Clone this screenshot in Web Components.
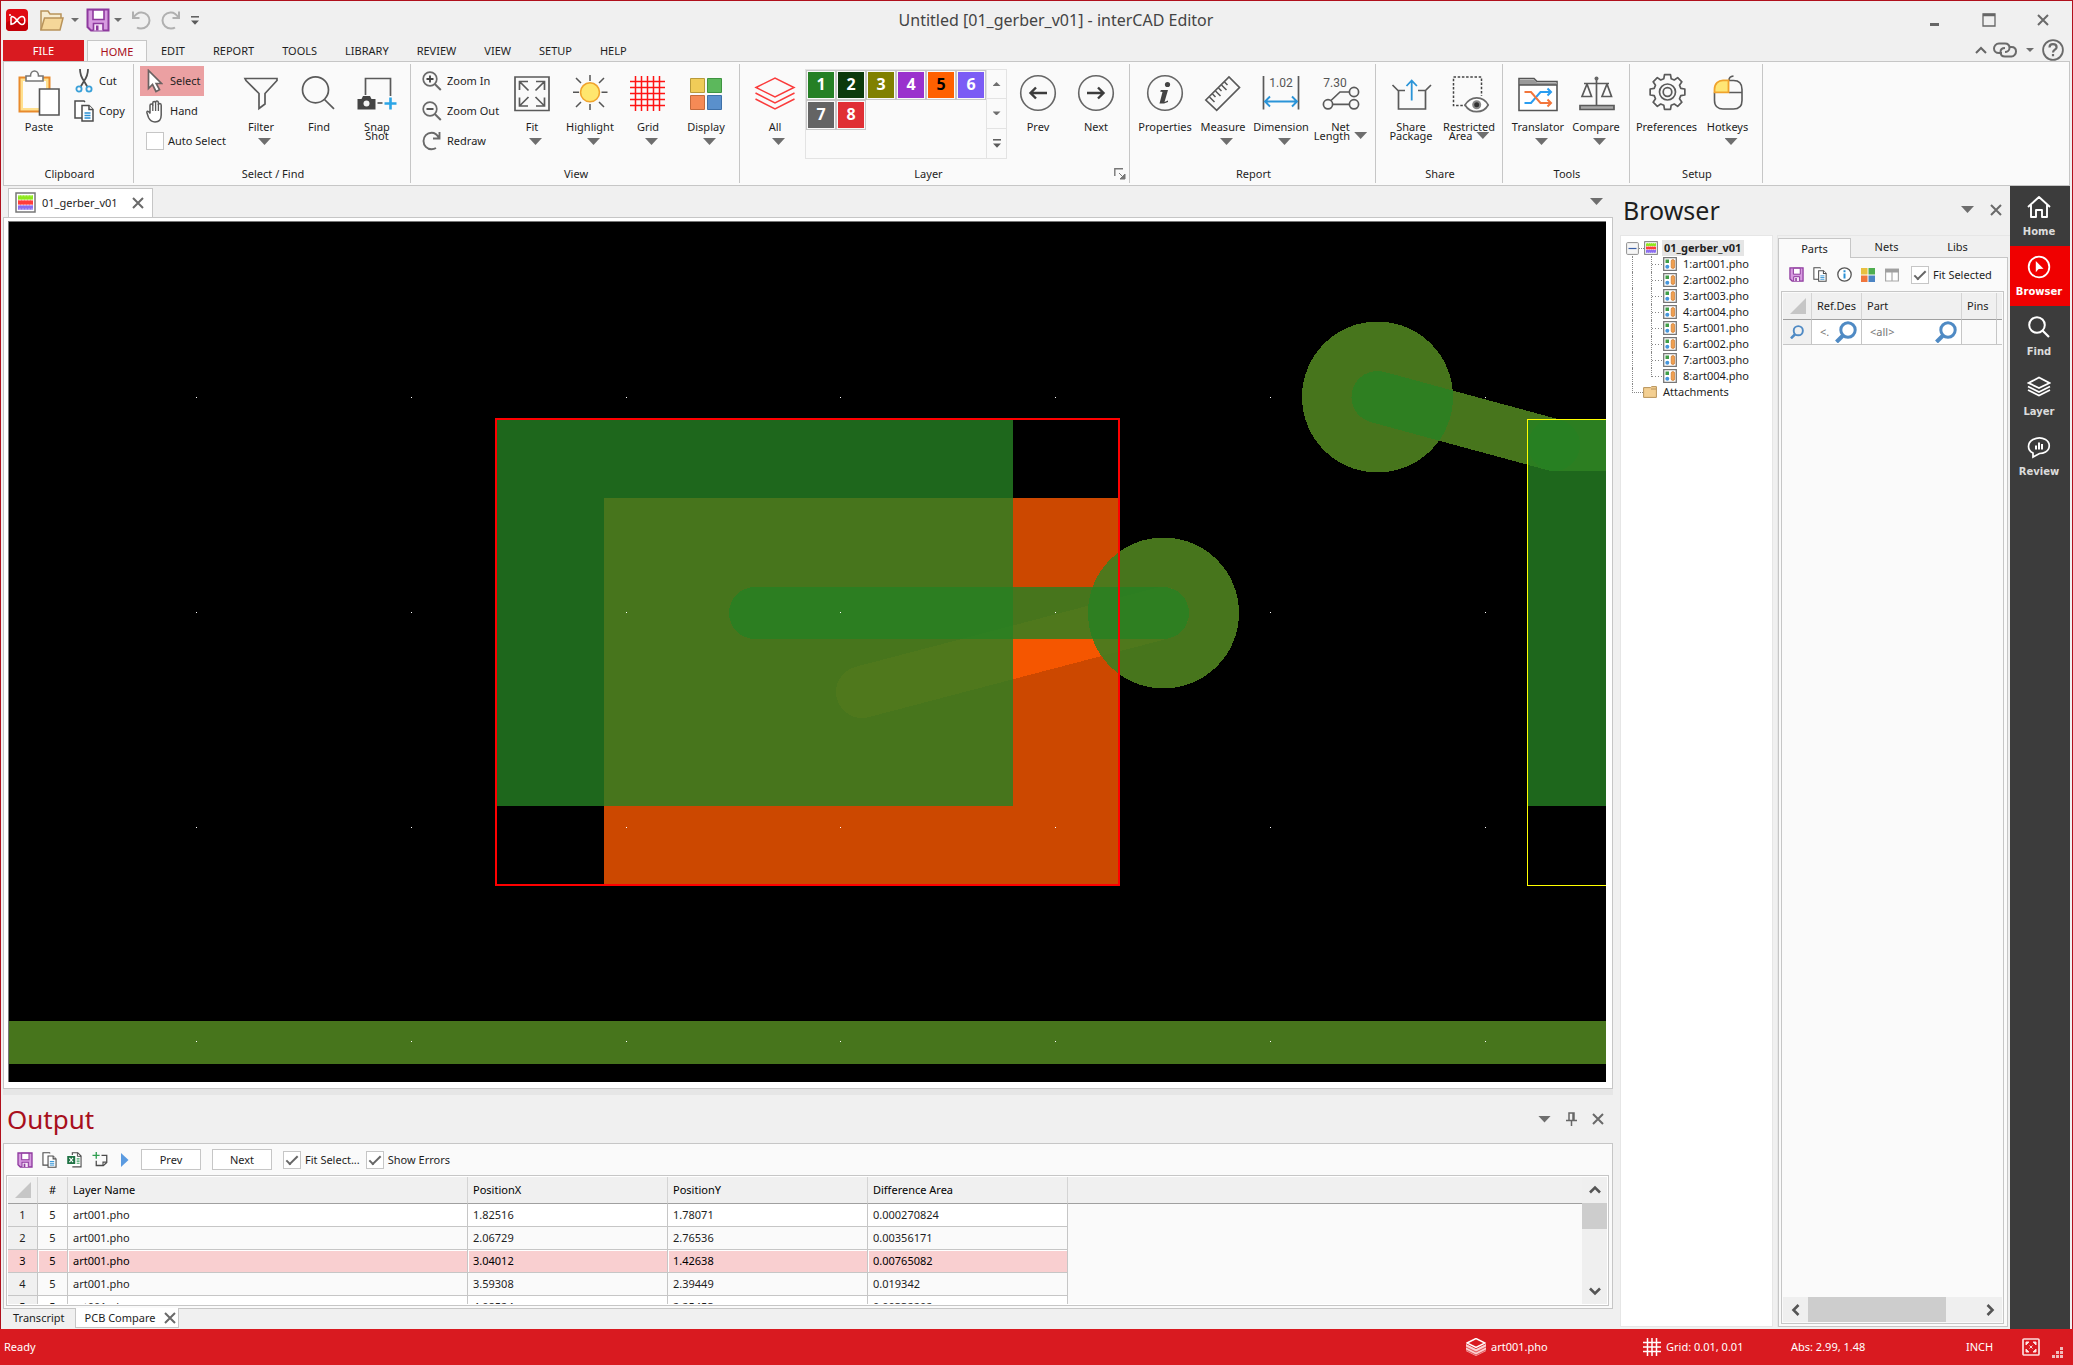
<!DOCTYPE html>
<html lang="en">
<head>
<meta charset="utf-8">
<title>Untitled [01_gerber_v01] - interCAD Editor</title>
<style>
html,body{margin:0;height:100%}
body{font:11px/16px "Noto Sans","Open Sans",sans-serif;color:#1e1e1e;background:#f0f0f0;
--line:#c6c6c6;--bg:#f0f0f0;--panel:#fafafa;--red:#d91a20;--ink:#1e1e1e;--grey:#6e6e6e}
</style>
</head>
<body>
<cad-app></cad-app>
<script>
const BASE = `<style>
*{box-sizing:border-box}
button,input{font:inherit;color:inherit;background:none;border:0;padding:0;margin:0;border-radius:0;outline:0}
a{color:inherit;text-decoration:none}
ul{list-style:none;margin:0;padding:0}
.caret{display:block;width:13px;height:7px;background:#6e6e6e;clip-path:polygon(0 0,100% 0,50% 100%)}
.caret.s{width:8px;height:4px}
</style>`;

function define(name, css, html) {
  customElements.define(name, class extends HTMLElement {
    connectedCallback() {
      if (this.shadowRoot) return;
      const t = document.createElement('template');
      t.innerHTML = BASE + `<style>${css}</style>` + (typeof html === 'function' ? html(this) : html);
      this.attachShadow({ mode: 'open' }).append(t.content.cloneNode(true));
    }
  });
}

function gear(cx, cy, r1, r2, n) {
  const p = [];
  for (let i = 0; i < n; i++) {
    const a = (i / n) * Math.PI * 2 - Math.PI / 2;
    [[-.27, r1], [-.17, r2], [.17, r2], [.27, r1]].forEach(([d, r]) =>
      p.push((cx + Math.cos(a + d) * r).toFixed(2) + ' ' + (cy + Math.sin(a + d) * r).toFixed(2)));
  }
  return 'M' + p.join('L') + 'Z';
}

const S = 'fill="none" stroke="#5a5a5a" stroke-width="1.7"';
const SAVE = '<path d="M1.5 1.5h21v21H5l-3.500-3.500z" fill="#d79be0" stroke="#8e3a9e" stroke-width="2"/><path d="M7 2h11v9.500H7z" fill="#fff" stroke="#8e3a9e" stroke-width="1.600"/><path d="M7.500 22.500V15.500h9.500v7" fill="#f6e6f8" stroke="#8e3a9e" stroke-width="1.600"/><path d="M10 17.500h2.500v5H10z" fill="#8e3a9e"/>';
const STACK = '<rect x="1" y="1" width="19" height="19" fill="#fff" stroke="#777" stroke-width="1.500"/><g stroke-width="4.500" fill="none"><path d="M3 5.500h15" stroke="#8ee81c"/><path d="M3 10.500h15" stroke="#ff3c3c"/><path d="M3 15.500h15" stroke="#8a6cf0"/></g><g stroke="#fff" stroke-width=".8" stroke-dasharray="1 2"><path d="M3.500 3.800h14M4.500 8h14M3.500 13h14M4.500 17h14"/></g>';
const COPY = '<g fill="#fff" stroke="#4c4c4c" stroke-width="1.500"><path d="M9 18H1V1h9l1 1"/><path d="M8 5.500h7l4 4V21H8z"/><path d="M15 5.500v4h4" /></g><path d="M10.500 13h6M10.500 15.500h6M10.500 18h6" stroke="#2a8fd4" stroke-width="1.300"/>';
const ZOOM = '<circle cx="8" cy="8" r="6.800" fill="none" stroke="#6a6a6a" stroke-width="1.700"/><path d="M12.800 13l6 6" stroke="#6a6a6a" stroke-width="2"/>';
const ICONS = {
  logo: ['0 0 22 22', '<rect width="22" height="22" rx="4" fill="#e00a12"/><rect y="12" width="22" height="10" rx="4" fill="#c40008"/><path d="M5 8.500v7M5 15.300c3 0 4-1.300 6-4s3-3.800 5-3.800 2.800 1.500 2.800 4-1 4-2.800 4-3-1.500-5-4.200S8 7.500 5.500 7.500" fill="none" stroke="#fff" stroke-width="1.500" stroke-linecap="round"/><circle cx="4" cy="6" r="1" fill="#fff"/>'],
  open: ['0 0 24 21', '<path d="M1 20V1h7l2 3h11v5" fill="#f7ecd0" stroke="#b8935a" stroke-width="1.500"/><path d="M1 20L4.500 8H23l-3 12z" fill="#f5d799" stroke="#b8935a" stroke-width="1.500"/>'],
  save: ['0 0 24 24', SAVE],
  undo: ['0 0 20 20', '<path d="M2 1.500v6.500h6.500M2.500 7.500C5 3.500 8 2 11 2.500c4.500.500 7.500 4 7.500 8 0 4.500-4 8-8.500 8-1.500 0-3-.300-4-1" fill="none" stroke="#b0b0b0" stroke-width="2"/>'],
  redo: ['0 0 20 20', '<path d="M18 1.500v6.500h-6.500M17.500 7.500C15 3.500 12 2 9 2.500c-4.500.500-7.500 4-7.500 8 0 4.500 4 8 8.500 8 1.500 0 3-.300 4-1" fill="none" stroke="#b0b0b0" stroke-width="2"/>'],
  more: ['0 0 8 9', '<path d="M0 .800h8" stroke="#5a5a5a" stroke-width="1.500"/><path d="M0 4.500h8L4 8.800z" fill="#5a5a5a"/>'],
  min: ['0 0 14 14', '<path d="M2 11.500h9" stroke="#666" stroke-width="3"/>'],
  max: ['0 0 14 14', '<path d="M1 1h12v12H1z" fill="none" stroke="#666" stroke-width="1.300"/><path d="M1 2h12" stroke="#666" stroke-width="2.500"/>'],
  close: ['0 0 12 12', '<path d="M1 1l10 10M11 1L1 11" stroke="#6a6a6a" stroke-width="2"/>'],
  up: ['0 0 12 8', '<path d="M1 7l5-5 5 5" fill="none" stroke="#666" stroke-width="2"/>'],
  link: ['0 0 24 16', '<g fill="none" stroke="#6a6a6a" stroke-width="2"><path d="M9 11H6C3 11 1 9 1 6.500S3 1.500 6 1.500h6c3 0 4.500 2 4.500 4.500S14 10 12 10"/><path d="M16 5h2.500c3 0 4.500 2 4.500 4.500s-2 5-4.500 5H12c-3 0-4.500-2-4.500-4.500S9.500 6 12 6"/></g>'],
  help: ['0 0 22 22', '<circle cx="11" cy="11" r="9.900" fill="none" stroke="#6a6a6a" stroke-width="1.800"/><path d="M7.500 8.500c0-2 1.500-3.300 3.500-3.300s3.600 1.200 3.600 3c0 2.500-3.600 2.500-3.600 5.300M11 15v2.300" fill="none" stroke="#6a6a6a" stroke-width="2.200"/>'],
  paste: ['18 70 42 46', '<path d="M19.500 77.500h30v34h-30z" fill="#ffe08e" stroke="#e88a2c" stroke-width="2"/><path d="M23 81h23v27H23z" fill="#fcfcfc"/><path d="M26 81v-5h4.500c0-3 2-5 4-5s4 2 4 5H43v5z" fill="#fff" stroke="#777" stroke-width="1.600"/><path d="M39.500 89h19.500v26H39.500z" fill="#fff" stroke="#555" stroke-width="1.600"/>'],
  cut: ['0 0 20 24', '<path d="M6 0c0 5 1 8 4 12l3.500 6M14 0c0 5-1 8-4 12l-3.500 6" fill="none" stroke="#505050" stroke-width="1.800"/><g fill="none" stroke="#3aa0d8" stroke-width="1.800"><circle cx="5" cy="20" r="2.600"/><circle cx="15" cy="20" r="2.600"/></g>'],
  copy: ['0 0 20 22', COPY],
  arrow: ['0 0 16 24', '<path d="M1.500 1.500v18l4-4 3.500 7 3.500-1.800-3.300-6.200h5.300z" fill="#fff" stroke="#6a6262" stroke-width="1.700"/>'],
  hand: ['0 0 18 23', '<path d="M4 13.500V5.500c0-2 2.800-2 2.800 0V3c0-2 2.800-2 2.800 0v-.500c0-2 2.800-2 2.800.500v2c0-2 2.800-2 2.800.300V15c0 4-2 7-6.200 7-3.500 0-5-1.500-6.500-4.500L1 13c-.700-2 1.500-3 3 .5z" fill="#fff" stroke="#5a5a5a" stroke-width="1.500"/><path d="M6.800 5v6M9.600 3v8M12.400 4v7" stroke="#5a5a5a" stroke-width="1.300"/>'],
  filter: ['240 70 42 46', `<path d="M245 78.500h32v2l-12 13v10.500l-6 4.500V93.500l-13-13z" ${S}/>`],
  find: ['297 70 42 46', `<circle cx="314.500" cy="89.800" r="13" ${S}/><path d="M323.500 99.500l9.500 9.300" ${S} stroke-width="2"/>`],
  snap: ['356 70 42 46', `<path d="M365.500 95V78.500h25V96" ${S}/><path d="M357.500 99h4l1.500-3h7l1.500 3h4v10.500h-18z" fill="#444"/><circle cx="366.500" cy="103.500" r="3" fill="#f4f4f4"/><path d="M377.500 103h5" stroke="#444" stroke-width="1.500"/><path d="M384.500 103.500h12M390.500 97.500v12" stroke="#2ba5e6" stroke-width="2.600"/>`],
  zin: ['0 0 20 20', ZOOM + '<path d="M4.500 8h7M8 4.500v7" stroke="#444" stroke-width="1.800"/>'],
  zout: ['0 0 20 20', ZOOM + '<path d="M4.500 8h7" stroke="#444" stroke-width="1.800"/>'],
  redraw: ['0 0 20 20', '<path d="M17.500 1v6.500H11M17 7C15 3 12 1.800 9.500 1.800 5 1.800 1.500 5.500 1.500 10s3.500 8.200 8 8.200c1.500 0 3-.300 4.500-1.200" fill="none" stroke="#6a6a6a" stroke-width="1.900"/>'],
  fit: ['511 70 42 46', `<path d="M515 77h34v33.500h-34z" ${S}/><path d="M519.500 90v-8.500h8.500M519.500 81.500l9 9M536 81.500h8.500V90M544.500 81.500l-9 9M519.500 97.500v8.500h8.500M519.500 106l9-9M536 106h8.500v-8.500M544.500 106l-9-9" ${S}/>`],
  sun: ['568 70 42 46', '<circle cx="589" cy="92.300" r="9.500" fill="#ffe66e" stroke="#f0a32c" stroke-width="1.600"/><path d="M589 75v6M589 104v6M572 92.300h6M600.500 92.300h6M575 78l5 5M603 78l-5 5M575 107l5-5M603 107l-5-5" stroke="#555" stroke-width="1.500"/>'],
  grid: ['627 70 42 46', '<path d="M635.500 76v35M641.500 76v35M647.500 76v35M653.500 76v35M659.500 76v35M630 81.500h35M630 87.500h35M630 93.500h35M630 99.500h35M630 105.500h35" stroke="#ff1414" stroke-width="1.500"/>'],
  display: ['686 70 42 46', '<g stroke-width="1"><path d="M691.500 78.500h14v14h-14z" fill="#f0cc58" stroke="#b89a3a"/><path d="M708.500 78.500h14v14h-14z" fill="#5cb85c" stroke="#3e9440"/><path d="M691.500 95.500h14v14h-14z" fill="#f58a56" stroke="#c46a3c"/><path d="M708.500 95.500h14v14h-14z" fill="#5a90cc" stroke="#3e70a8"/></g>'],
  layers: ['754 70 42 46', '<g fill="none" stroke="#fa3c3c" stroke-width="1.500"><path d="M756 87.500l19-9.500 19 9.500-19 9.500zM755.500 93l19.500 10 19.500-10M755.500 99l19.500 10 19.500-10"/></g>'],
  prev: ['1017 70 42 46', '<circle cx="1038" cy="93" r="17.300" fill="none" stroke="#666" stroke-width="1.600"/><path d="M1047 93h-16M1036 87.500l-5.500 5.500 5.500 5.500" fill="none" stroke="#3c3c3c" stroke-width="2.400"/>'],
  next: ['1017 70 42 46', '<circle cx="1038" cy="93" r="17.300" fill="none" stroke="#666" stroke-width="1.600"/><path d="M1029 93h16M1040 87.500l5.500 5.500-5.500 5.500" fill="none" stroke="#3c3c3c" stroke-width="2.400"/>'],
  info: ['1144 70 42 46', '<circle cx="1165" cy="93" r="17.300" fill="none" stroke="#666" stroke-width="1.600"/><circle cx="1167.500" cy="84.500" r="2.600" fill="#444"/><path d="M1161 90h7l-3.500 12 3.500-1.500v1.500l-4 1.500h-4.500l3-11.500-2.500-.500z" fill="#444"/>'],
  ruler: ['1203 70 42 46', `<path d="M1206.800 100l23.200-23 10.500 10.500-22.800 22.800z" ${S}/><path d="M1210.500 97l5 5M1213.500 94l3 3M1216.500 91l5 5M1219.500 88l3 3M1222.500 85l5 5M1225.500 82l3 3" stroke="#555" stroke-width="1.500"/>`],
  dim: ['1260 70 42 46', `<path d="M1263.500 76v33.500M1298.500 76v33.500" ${S}/><text x="1281" y="87" text-anchor="middle" font-family="Roboto" font-size="12" fill="#555">1.02</text><path d="M1265 101.500h32M1270 96.500l-5 5 5 5M1292 96.500l5 5-5 5" fill="none" stroke="#2a94d8" stroke-width="1.900"/>`],
  net: ['1320 70 42 46', `<text x="1335" y="87" text-anchor="middle" font-family="Roboto" font-size="12" fill="#555">7.30</text><g ${S}><circle cx="1354" cy="92" r="4.600"/><circle cx="1354" cy="104.300" r="4.600"/><circle cx="1328" cy="104.300" r="4.600"/><path d="M1333 104.300h16M1331 100.500l9-8.500h9"/></g>`],
  share: ['1391 70 42 46', `<path d="M1406 90.500h-7l-5.500-5.500M1399.500 90.500V109h27V90.500M1419 90.500h7.500l5.500-5.500" ${S}/><path d="M1412.700 100.500V80.500M1407.500 86l5.200-5.500 5.200 5.500" fill="none" stroke="#2a94d8" stroke-width="1.800"/>`],
  area: ['1449 70 42 46', `<path d="M1468 105.500h-13.500V77h28v19" fill="none" stroke="#444" stroke-width="1.500" stroke-dasharray="2.500 1.700"/><path d="M1466 105c3-5 7-7.200 11.700-7.200s9 2.200 11.500 7.200c-2.500 4.500-6.500 6.700-11.500 6.700s-9-2.200-11.700-6.700z" fill="#fff" stroke="#6a6a6a" stroke-width="1.700"/><circle cx="1477.700" cy="104.700" r="4.500" fill="#888"/><circle cx="1477.700" cy="104.700" r="2.500" fill="#333"/>`],
  trans: ['1518 70 42 46', '<path d="M1520 110.500V78.500h15l3 3h20v29z" fill="#fff" stroke="#555" stroke-width="1.600"/><path d="M1521 79.500h14l3 3h20v2.500h-37z" fill="#999"/><path d="M1520 85h38" stroke="#555" stroke-width="1.400"/><g fill="none" stroke-width="2"><path d="M1525.500 103h6.500l9.500-11h10M1548.500 88.500l3.500 3.500-3.500 3.500" stroke="#2b9df0"/><path d="M1525.500 92h6.500l9.500 11h10M1548.500 99.500l3.500 3.500-3.500 3.500" stroke="#f2763c"/></g>'],
  scale: ['1576 70 42 46', `<g ${S}><path d="M1581 105.500h34v4h-34z" fill="#a8a8a8"/><path d="M1597.500 79v26M1585 83.500h25M1588 84l-5 12.500h9.500L1588 84M1608 84l-5 12.500h9.500L1608 84"/></g><circle cx="1597.500" cy="78.500" r="2" fill="#666"/>`],
  gear: ['1647 70 42 46', `<path d="${gear(1668.5, 92, 13.8, 17.6, 8)}" ${S} stroke-linejoin="round"/><circle cx="1668.500" cy="92" r="8" ${S}/><circle cx="1668.500" cy="92" r="4.300" ${S} stroke="#888"/>`],
  mouse: ['1707 70 42 46', '<path d="M1714.500 92.500v8c0 6 4 8.500 8.500 8.500h10.500c5 0 8.500-2.500 8.500-8.500v-11c0-6-3.500-9-8.500-9H1729" fill="none" stroke="#5a5a5a" stroke-width="1.600"/><path d="M1729 92.500h13M1729 80c0-2 1-3.500 4.500-4" fill="none" stroke="#5a5a5a" stroke-width="1.600"/><path d="M1714.500 92.300v-3c0-6 4-9 8.500-9h5.500v12z" fill="#ffe675" stroke="#f0a32c" stroke-width="1.800"/>'],
  launch: ['0 0 12 12', '<path d="M.800 8V.800H9" fill="none" stroke="#777" stroke-width="1.400"/><path d="M5 5l5 5M11 6v5H6z" stroke="#777" fill="#777"/>'],
  stack: ['0 0 21 21', STACK],
  excel: ['0 0 20 22', '<path d="M7 20.500h12v-15L14.500 1H7v3" fill="#fff" stroke="#4c4c4c" stroke-width="1.500"/><path d="M14 1v5h5" fill="none" stroke="#4c4c4c" stroke-width="1.300"/><path d="M13 9.500h4M13 12.500h4M13 15.500h4" stroke="#38a060" stroke-width="1.500"/><path d="M0 5.500h11v11H0z" fill="#1f7244"/><path d="M3 8l5 6M8 8l-5 6" stroke="#fff" stroke-width="1.600"/>'],
  newdoc: ['0 0 20 20', '<path d="M5 0v9M0 4.500h9.500" stroke="#2f9e50" stroke-width="1.800"/><path d="M5 11.500V18h9.500l4.500-4V4.500h-7" fill="none" stroke="#4c4c4c" stroke-width="1.700"/><path d="M14 18v-4.500h4.500" fill="none" stroke="#4c4c4c" stroke-width="1.500"/>'],
  play: ['0 0 8 14', '<path d="M0 0l7.500 7L0 14z" fill="#5a9ae0"/>'],
  pin: ['0 0 11 14', '<path d="M3 8V1h5v7M0 8.500h11M5.500 9v5M7 1v7" fill="none" stroke="#666" stroke-width="1.500"/>'],
  infoS: ['0 0 15 15', '<circle cx="7.500" cy="7.500" r="6.700" fill="#fff" stroke="#555" stroke-width="1.300"/><path d="M7.500 6.500v5M7.500 3.300v1.900" stroke="#2a8fd4" stroke-width="2"/>'],
  tiles: ['0 0 14 14', '<path d="M0 0h6.500v6.500H0z" fill="#e8c040"/><path d="M7.500 0H14v6.500H7.500z" fill="#4fae4f"/><path d="M0 7.500h6.500V14H0z" fill="#f0763c"/><path d="M7.500 7.500H14V14H7.500z" fill="#4c84c4"/>'],
  table: ['0 0 14 14', '<path d="M.600 1h12.800v12H.600z" fill="#fff" stroke="#a8a8a8" stroke-width="1.200"/><path d="M0 1h14v3.500H0z" fill="#a0a0a0"/><path d="M7 4v9" stroke="#a8a8a8" stroke-width="1.200"/>'],
  mag: ['0 0 22 22', '<circle cx="13" cy="9" r="7.200" fill="none" stroke="#4f8ac4" stroke-width="3"/><path d="M8 14.500L1.500 21" stroke="#4f8ac4" stroke-width="4"/>'],
  corner: ['0 0 16 16', '<path d="M16 0v16H0z" fill="#c6c6c6"/>'],
  file: ['0 0 14 14', '<path d="M.700.700h12.600v12.600H.700z" fill="#fff" stroke="#777" stroke-width="1.300"/><path d="M2.500 2.500h3.500v3.500H2.500z" fill="#3f9e46"/><circle cx="4.300" cy="9.800" r="2" fill="#4596dc"/><rect x="8.200" y="2.600" width="3.400" height="8.800" rx="1.500" fill="#f0a050" stroke="#c87830" stroke-width=".7"/>'],
  folder: ['0 0 14 12', '<path d="M.600 11.400V1.600h7l1-1h4.800v10.800z" fill="#f3cf92" stroke="#b8935a"/><path d="M8 3h5" stroke="#b8935a"/>'],
  minus: ['0 0 13 13', '<rect x=".6" y=".6" width="11.800" height="11.800" rx="1" fill="#f6f6f6" stroke="#909090"/><path d="M2.500 6.500h8" stroke="#3a5fa8" stroke-width="1.200"/>'],
  home: ['0 0 24 24', '<path d="M1 12L12 2l11 10M4 10v12h5v-7h6v7h5V10" fill="none" stroke="#fff" stroke-width="1.900" stroke-linejoin="round"/>'],
  compass: ['0 0 24 24', '<circle cx="12" cy="12" r="10.300" fill="none" stroke="#fff" stroke-width="1.800"/><path d="M8.800 6v11.200l2.900-3.200 4.800-.3z" fill="#fff"/>'],
  findN: ['0 0 24 24', '<circle cx="10" cy="10" r="7.800" fill="none" stroke="#fff" stroke-width="2"/><path d="M15.500 15.500L22 22" stroke="#fff" stroke-width="2.200"/>'],
  layerN: ['0 0 24 24', '<g fill="none" stroke="#fff" stroke-width="1.800"><path d="M1.500 8L12 2.500 22.500 8 12 13zM1 11.500l11 5.500 11-5.500M1 15l11 5.500L23 15"/></g>'],
  review: ['0 0 24 24', '<path d="M6 18c-6-3-6-10 0-13.500 4-2 9-2 12.500 0 5 3 5 9.500 0 12.500-2 1.200-4 1.500-6 1.500L6 22z" fill="none" stroke="#fff" stroke-width="1.700"/><path d="M9 10.500V14.500M12 7.500v7M15 9v5.500" stroke="#fff" stroke-width="2"/>'],
  layerS: ['0 0 20 18', '<path d="M1 5l9-4.500L19 5l-9 4.500z" fill="none" stroke="#fff" stroke-width="1.500"/><path d="M0 6l10 5 10-5v7l-10 5-10-5z" fill="#fbd0d0"/><path d="M0 9l10 5 10-5M0 12l10 5 10-5" fill="none" stroke="#d91a20" stroke-width=".7"/>'],
  gridS: ['0 0 18 18', '<path d="M4.500 0v18M9 0v18M13.500 0v18M0 4.500h18M0 9h18M0 13.500h18" stroke="#fff" stroke-width="1.500"/>'],
  fitS: ['0 0 18 18', '<rect x="1" y="1" width="16" height="16" rx="1" fill="none" stroke="#fbdcdc" stroke-width="1.700"/><path d="M4 4h3L4 7zM14 4h-3l3 3zM4 14h3l-3-3zM14 14h-3l3-3zM7.500 7.500l3 3M10.500 7.500l-3 3" fill="#fff" stroke="#fbdcdc"/>'],
  grip: ['0 0 12 12', '<g fill="#f0bcbc"><path d="M8 0h3v3H8zM4 4h3v3H4zM8 4h3v3H8zM0 8h3v3H0zM4 8h3v3H4zM8 8h3v3H8z"/></g>'],
};

define('ui-icon', `:host{display:block;flex:none}svg{display:block;width:100%;height:100%}`, el => {
  const [vb, body] = ICONS[el.getAttribute('name')];
  const [, , w, h] = vb.split(' ');
  el.style.width = (el.getAttribute('w') || w) + 'px';
  el.style.height = (el.getAttribute('h') || h) + 'px';
  return `<svg viewBox="${vb}" aria-hidden="true">${body}</svg>`;
});

define('tool-check', `:host{display:block}
label{display:flex;align-items:center;gap:4px;white-space:nowrap}
input{appearance:none;width:18px;height:18px;border:1px solid var(--line);background:#fff;display:flex;align-items:center;justify-content:center}
input:checked::after{content:"";width:10px;height:4px;border:solid #666;border-width:0 0 2px 2px;transform:translateY(-1px) rotate(-45deg)}`,
  el => `<label><input type="checkbox" ${el.hasAttribute('checked') ? 'checked' : ''}><span><slot></slot></span></label>`);

define('title-bar', `:host{display:flex;height:38px;align-items:stretch}
button{display:flex;align-items:center;justify-content:center}
.qa{display:flex;align-items:center;padding-left:3px}
.d{width:22px}.u{width:30px}.m{width:18px}.n{width:16px}.l{margin-right:12px}
h1{flex:1;margin:0;font-size:16px;line-height:38px;font-weight:400;text-align:center;color:#444}
.w button{width:54px;height:100%}.w{display:flex}`,
  `<div class="qa"><button class="l" aria-label="Application menu"><ui-icon name="logo"></ui-icon></button>
<button aria-label="Open"><ui-icon name="open"></ui-icon></button><button class="d" aria-label="Open options"><i class="caret s"></i></button>
<button aria-label="Save"><ui-icon name="save"></ui-icon></button><button class="n" aria-label="Save options"><i class="caret s"></i></button>
<button class="u" aria-label="Undo"><ui-icon name="undo"></ui-icon></button><button class="u" aria-label="Redo"><ui-icon name="redo"></ui-icon></button>
<button class="m" aria-label="Customize"><ui-icon name="more"></ui-icon></button></div>
<h1>Untitled [01_gerber_v01] - interCAD Editor</h1>
<div class="w"><button aria-label="Minimize"><ui-icon name="min"></ui-icon></button><button aria-label="Maximize"><ui-icon name="max"></ui-icon></button><button aria-label="Close"><ui-icon name="close"></ui-icon></button></div>`);

define('menu-tabs', `:host{display:flex;height:22px;justify-content:space-between}
nav{display:flex;align-items:flex-end}
nav button{height:21px;padding:0 14px}
nav .file{background:var(--red);color:#fff;width:81px;margin-right:3px}
nav .on{width:60px;padding:0;background:var(--panel);border:1px solid var(--line);border-bottom:0;color:#a80f1c;height:22px;margin-bottom:-1px}
.r{display:flex;align-items:center;padding-right:6px}
.r button{display:flex}
.k{margin:0 9px 0 6px}.o{margin-right:8px}`,
  `<nav><button class="file">FILE</button><button class="on">HOME</button>${['EDIT', 'REPORT', 'TOOLS', 'LIBRARY', 'REVIEW', 'VIEW', 'SETUP', 'HELP'].map(t => `<button>${t}</button>`).join('')}</nav>
<div class="r"><button aria-label="Collapse ribbon"><ui-icon name="up"></ui-icon></button><button class="k" aria-label="Share link"><ui-icon name="link"></ui-icon></button><button class="o" aria-label="Link options"><i class="caret s"></i></button><button aria-label="Help"><ui-icon name="help"></ui-icon></button></div>`);

define('ribbon-group', `:host{display:flex;flex-direction:column;position:relative;margin:2px 0;padding:0 4px 0 6px;border-right:1px solid var(--line)}
.b{display:flex;flex:1}
.l{height:17px;line-height:16px;text-align:center}
:host([launcher]) .l{padding-right:14px}
button{position:absolute;right:3px;bottom:3px}`,
  el => `<div class="b"><slot></slot></div><div class="l">${el.getAttribute('label')}</div>${el.hasAttribute('launcher') ? '<button aria-label="Layer options"><ui-icon name="launch"></ui-icon></button>' : ''}`);

define('ribbon-button', `:host{display:block;width:58px}:host([wide]){width:61px}
button{display:flex;flex-direction:column;align-items:center;width:100%;height:96px;padding-top:6px;line-height:9px}
.t{margin-top:6px;white-space:nowrap}
.r{display:flex;align-items:center;gap:4px;white-space:nowrap}
.c{margin:7px 0 0 7px}`,
  el => {
    const c = el.hasAttribute('caret'), s = el.getAttribute('second');
    return `<button><ui-icon name="${el.getAttribute('icon')}"></ui-icon><span class="t"><slot></slot></span>${s ? `<span class="${c ? 'r' : ''}">${s}${c ? '<i class="caret"></i>' : ''}</span>` : c ? '<i class="caret c"></i>' : ''}</button>`;
  });

define('ribbon-item', `:host{display:block;height:30px}
button{display:flex;align-items:center;height:30px;white-space:nowrap}
.i{width:30px;display:flex;justify-content:center}
:host([on]) button{background:#eba0a2;width:64px}`,
  el => `<button><span class="i"><ui-icon name="${el.getAttribute('icon')}"></ui-icon></span><slot></slot></button>`);

define('layer-gallery', `:host{display:grid;grid-template-columns:180px 20px;margin:5px 2px 0 1px;height:90px;border:1px solid #e3e3e3}
.s{display:flex;flex-wrap:wrap;align-content:flex-start}
.s button{width:30px;height:30px;border:1px solid #c8c8c8;padding:1px}
.s span{display:block;height:26px;line-height:25px;font-weight:700;font-size:16px;color:#fff;text-align:center}
.a{display:grid;grid-template-rows:1fr 1fr 1fr;border-left:1px solid #e3e3e3}
.a button{display:flex;align-items:center;justify-content:center;border-bottom:1px solid #e3e3e3}
.a button:last-child{border:0}.up{transform:scaleY(-1)}`,
  () => `<div class="s">${['#258025', '#0c3a0c', '#808000', '#9a32cd', '#ff6000', '#7b5cf5', '#646464', '#e03035'].map((c, i) => `<button aria-label="Layer ${i + 1}"><span style="background:${c}${i === 4 ? ';color:#000' : ''}">${i + 1}</span></button>`).join('')}</div>
<div class="a"><button aria-label="Scroll up"><i class="caret s up"></i></button><button aria-label="Scroll down"><i class="caret s"></i></button><button aria-label="More"><ui-icon name="more"></ui-icon></button></div>`);

define('app-ribbon', `:host{display:flex;border:1px solid var(--line);background:var(--panel);height:125px}
.c{display:flex;flex-direction:column;padding-top:2px}
.k{width:61px;padding-left:1px}.q{width:92px}.v{width:86px}
tool-check{padding:6px 0 0 6px}`,
  `<ribbon-group label="Clipboard"><ribbon-button icon="paste">Paste</ribbon-button><div class="c k"><ribbon-item icon="cut">Cut</ribbon-item><ribbon-item icon="copy">Copy</ribbon-item></div></ribbon-group>
<ribbon-group label="Select / Find"><div class="c q"><ribbon-item icon="arrow" on>Select</ribbon-item><ribbon-item icon="hand">Hand</ribbon-item><tool-check>Auto Select</tool-check></div>
<ribbon-button icon="filter" caret>Filter</ribbon-button><ribbon-button icon="find">Find</ribbon-button><ribbon-button icon="snap" second="Shot">Snap</ribbon-button></ribbon-group>
<ribbon-group label="View"><div class="c v"><ribbon-item icon="zin">Zoom In</ribbon-item><ribbon-item icon="zout">Zoom Out</ribbon-item><ribbon-item icon="redraw">Redraw</ribbon-item></div>
<ribbon-button icon="fit" caret>Fit</ribbon-button><ribbon-button icon="sun" caret>Highlight</ribbon-button><ribbon-button icon="grid" caret>Grid</ribbon-button><ribbon-button icon="display" caret>Display</ribbon-button></ribbon-group>
<ribbon-group label="Layer" launcher><ribbon-button icon="layers" caret>All</ribbon-button><layer-gallery></layer-gallery><ribbon-button icon="prev">Prev</ribbon-button><ribbon-button icon="next">Next</ribbon-button></ribbon-group>
<ribbon-group label="Report"><ribbon-button icon="info">Properties</ribbon-button><ribbon-button icon="ruler" caret>Measure</ribbon-button><ribbon-button icon="dim" caret>Dimension</ribbon-button><ribbon-button wide icon="net" caret second="Length">Net</ribbon-button></ribbon-group>
<ribbon-group label="Share"><ribbon-button icon="share" second="Package">Share</ribbon-button><ribbon-button icon="area" caret second="Area">Restricted</ribbon-button></ribbon-group>
<ribbon-group label="Tools"><ribbon-button icon="trans" caret>Translator</ribbon-button><ribbon-button icon="scale" caret>Compare</ribbon-button></ribbon-group>
<ribbon-group label="Setup"><ribbon-button wide icon="gear">Preferences</ribbon-button><ribbon-button wide icon="mouse" caret>Hotkeys</ribbon-button></ribbon-group>`);

/* Board view: the orange layer is painted first, the green layer over it, both at 80 %. */
define('pcb-canvas', `:host{display:block;flex:1;min-height:0;background:#000;border:solid #777;border-width:1px 0 0 1px;overflow:hidden}
svg{display:block;width:100%;height:100%}`, () => {
  const shared = '<circle cx="1154.500" cy="391" r="75.500"/><circle cx="1368.500" cy="175" r="75.500"/><rect x="0" y="799" width="6000" height="43"/><path d="M1368.500 175L1545 223" class="t"/><path d="M1545 223H4000" class="t"/>';
  let dots = '';
  for (let y = 0; y < 4; y++) for (let x = 0; x < 7; x++)
    dots += `<rect x="${Math.round(187 + x * 214.8)}" y="${Math.round(175 + y * 214.8)}" width="1" height="1"/>`;
  return `<svg role="img" aria-label="Board layers" shape-rendering="crispEdges"><style>.o *{fill:#ff5a00;opacity:.8}.g *{fill:#268123;opacity:.8}.t{fill:none!important;stroke-width:52;stroke-linecap:round}.o .t{stroke:#ff5a00}.g .t{stroke:#268123}</style>
<g class="o"><rect x="595" y="276" width="515" height="386"/><path d="M1154 391L853 470" class="t"/>${shared}</g>
<g class="g"><rect x="487" y="197" width="517" height="387"/><rect x="1519" y="197" width="2000" height="387"/><path d="M746 391H1154" class="t"/>${shared}</g>
<g fill="#fff">${dots}</g>
<rect x="487" y="197" width="623" height="466" fill="none" stroke="#f00" stroke-width="2"/>
<rect x="1518.500" y="197.500" width="2000" height="466" fill="none" stroke="#ff0"/></svg>`;
});

define('doc-view', `:host{display:flex;flex-direction:column;flex:1;min-height:0}
.tabs{height:31px;display:flex;align-items:flex-end;justify-content:space-between;padding:0 10px 0 5px}
.tab{height:30px;margin-bottom:-1px;width:145px;display:flex;align-items:center;gap:6px;padding:0 7px 2px 6px;background:#fff;border:1px solid var(--line);border-bottom:0}
.tab button{margin-left:auto;padding-right:1px}
.m{align-self:center}
.f{flex:1;min-height:0;display:flex;border:1px solid var(--line);background:#fff;padding:3px 6px 6px 4px}`,
  `<div class="tabs"><div class="tab"><ui-icon name="stack"></ui-icon><span>01_gerber_v01</span><button aria-label="Close tab"><ui-icon name="close"></ui-icon></button></div><button class="m" aria-label="Documents"><i class="caret"></i></button></div>
<div class="f"><pcb-canvas></pcb-canvas></div>`);

define('scroll-bar', `:host{display:flex;background:#efefef;align-items:stretch}
:host([dir=v]){flex-direction:column;width:25px}:host([dir=h]){height:25px}
button{width:26px;height:26px;flex:none;display:flex;align-items:center;justify-content:center}
:host([dir=h]) button{height:25px;width:25px}
svg{width:14px;height:14px}.track{flex:1;min-height:0;display:flex;flex-direction:inherit}.thumb{background:#cdcdcd}
:host([dir=v]) .thumb{height:26px}:host([dir=h]) .thumb{width:138px}`,
  el => {
    const v = el.getAttribute('dir') === 'v';
    const a = d => `<svg viewBox="0 0 14 14"><path d="${d}" fill="none" stroke="#555" stroke-width="2.600"/></svg>`;
    return `<button aria-label="Back">${a(v ? 'M2 9.500l5-5 5 5' : 'M9.500 2l-5 5 5 5')}</button><div class="track"><div class="thumb"></div></div><button aria-label="Forward">${a(v ? 'M2 4.500l5 5 5-5' : 'M4.500 2l5 5-5 5')}</button>`;
  });

define('output-panel', `:host{display:flex;flex-direction:column;flex:none;border-top:6px solid #e6e6e6}
header{height:48px;display:flex;align-items:center;justify-content:space-between;padding:0 9px 0 4px}
h2{margin:0;font-size:26px;line-height:34px;font-weight:400;color:#a80f1c}
header div{display:flex;gap:15px;align-items:center}header button{display:flex}
.f{border:1px solid var(--line);background:var(--panel);height:166px;padding:0 3px 2px 2px;display:flex;flex-direction:column}
.bar{height:31px;flex:none;display:flex;align-items:center;padding-left:11px}
.bar .i{display:flex;width:25px}
.bar .run{display:flex;width:24px;padding-left:4px}
.bar .b{width:60px;height:21px;border:1px solid var(--line);background:#fff;margin-right:11px}
tool-check{margin-right:6px}
.g{flex:1;min-height:0;border:1px solid var(--line);padding:1px;display:flex;background:#fff}
.v{flex:1;overflow:hidden;background:var(--panel)}
table{border-collapse:separate;border-spacing:0;table-layout:fixed;width:100%}
th,td{font-weight:400;text-align:left;padding:0 5px;border-right:1px solid var(--line);border-bottom:1px solid var(--line);height:23px;line-height:16px;background:#fff}
thead th{height:27px;background:var(--bg);border-color:#a0a0a0;border-right-color:#d4d4d4;color:#000}
th:first-child,td:nth-child(2),thead th:nth-child(2){text-align:center}
tbody th{background:var(--bg)}
tr:nth-child(even) td{background:var(--panel)}
tr.on td,tr.on th{background:#f9cfd0;color:#000}tr.on td{box-shadow:inset 1px 1px #fff}
td:last-child{background:none!important;border:0;box-shadow:none!important}thead th:last-child{border-right:0}
.tabs{display:flex;height:21px;margin-top:-1px;padding-bottom:1px}
.tabs button{padding:0 10px;display:flex;align-items:center}
.tabs .on{background:#fff;border:1px solid var(--line);border-top:0;width:104px;padding:0 2px 0 9px;justify-content:space-between;white-space:nowrap}
thead ui-icon{margin-left:2px}`,
  () => {
    const rows = [['1.82516', '1.78071', '0.000270824'], ['2.06729', '2.76536', '0.00356171'], ['3.04012', '1.42638', '0.00765082'], ['3.59308', '2.39449', '0.019342'], ['4.08524', '2.25453', '0.00332202']];
    return `<header><h2>Output</h2><div><button aria-label="Panel menu"><i class="caret"></i></button><button aria-label="Pin panel"><ui-icon name="pin"></ui-icon></button><button aria-label="Close panel"><ui-icon name="close"></ui-icon></button></div></header>
<div class="f"><div class="bar"><button class="i" aria-label="Save"><ui-icon name="save" w="16" h="16"></ui-icon></button><button class="i" aria-label="Copy"><ui-icon name="copy" w="15" h="16"></ui-icon></button><button class="i" aria-label="Export to Excel"><ui-icon name="excel" w="15" h="16"></ui-icon></button><button class="i" aria-label="New"><ui-icon name="newdoc" w="16" h="15"></ui-icon></button><button class="run" aria-label="Run"><ui-icon name="play"></ui-icon></button>
<button class="b">Prev</button><button class="b">Next</button><tool-check checked>Fit Select...</tool-check><tool-check checked>Show Errors</tool-check></div>
<div class="g"><div class="v"><table><colgroup><col style="width:30px"><col style="width:30px"><col style="width:400px"><col style="width:200px"><col style="width:200px"><col style="width:200px"><col></colgroup>
<thead><tr><th aria-label="Row"><ui-icon name="corner"></ui-icon></th><th>#</th><th>Layer Name</th><th>PositionX</th><th>PositionY</th><th>Difference Area</th><th></th></tr></thead>
<tbody>${rows.map((r, i) => `<tr class="${i === 2 ? 'on' : ''}"><th>${i + 1}</th><td>5</td><td>art001.pho</td>${r.map(c => `<td>${c}</td>`).join('')}<td></td></tr>`).join('')}</tbody></table></div><scroll-bar dir="v"></scroll-bar></div></div>
<div class="tabs"><button>Transcript</button><button class="on">PCB Compare<ui-icon name="close"></ui-icon></button></div>`;
  });

define('object-tree', `:host{display:block;background:#fff;border:1px solid #e6e6e6;width:153px;padding:4px 0 0 5px}
li{height:16px;display:flex;align-items:center;white-space:nowrap}
.dots{width:5px;height:1px;border-top:1px dotted #888}
b{background:#e5e5e5;padding:0 3px 0 2px;margin-left:4px}
.v{margin-left:6px;width:19px;height:16px;border-left:1px dotted #888}
.e{width:12px;height:16px;border-left:1px dotted #888;background:repeating-linear-gradient(90deg,#888 0 1px,transparent 1px 3px) 0 8px/100% 1px no-repeat}
.e.z{height:9px;align-self:flex-start}
.x{margin-left:6px;width:11px;height:9px;align-self:flex-start;border-left:1px dotted #888;border-bottom:1px dotted #888}
li span{margin-left:6px}`,
  () => `<ul><li><ui-icon name="minus"></ui-icon><i class="dots"></i><ui-icon name="stack" w="14" h="14"></ui-icon><b>01_gerber_v01</b></li>
${[1, 2, 3, 4, 1, 2, 3, 4].map((n, i) => `<li><i class="v"></i><i class="e ${i === 7 ? 'z' : ''}"></i><ui-icon name="file"></ui-icon><span>${i + 1}:art00${n}.pho</span></li>`).join('')}
<li><i class="x"></i><ui-icon name="folder"></ui-icon><span>Attachments</span></li></ul>`);

define('parts-view', `:host{display:flex;flex-direction:column;flex:1;min-width:0;border:solid #e6e6e6;border-width:1px 0 0 1px;padding:2px 1px 0 0}
.tabs{display:flex;height:19px}
.tabs button{width:71px;height:18px}
.tabs .on{width:73px;height:20px;background:var(--panel);border:1px solid var(--line);border-bottom:0;position:relative}
.f{flex:1;min-height:0;border:1px solid var(--line);background:var(--panel);padding:0 3px 2px 2px;display:flex;flex-direction:column;margin-right:1px}
.bar{height:33px;flex:none;display:flex;align-items:center;padding-left:8px}
.bar button{width:24px;display:flex}
tool-check{margin-left:2px}
.g{flex:1;min-height:0;border:1px solid var(--line);padding:1px;display:flex;flex-direction:column}
.v{flex:1;min-height:0;overflow:hidden}
table{border-collapse:separate;border-spacing:0;table-layout:fixed;width:260px}
th,td{font-weight:400;text-align:left;padding:0 5px;height:27px;background:var(--bg);border-right:1px solid #d4d4d4;border-bottom:1px solid #a0a0a0;white-space:nowrap}
td{height:25px;border-color:var(--line);background:#fff}td:first-child,td:nth-last-child(-n+2){background:var(--bg)}td:nth-last-child(-n+2){background:var(--panel)}
th:first-child,td:first-child{padding:0 5px 0 7px}
.q{display:flex;align-items:center;margin-right:-1px;padding-left:3px}
input{flex:1;min-width:0;width:0;color:#777}`,
  `<div class="tabs"><button class="on">Parts</button><button>Nets</button><button>Libs</button></div>
<div class="f"><div class="bar"><button aria-label="Save"><ui-icon name="save" w="15" h="15"></ui-icon></button><button aria-label="Copy"><ui-icon name="copy" w="14" h="15"></ui-icon></button><button aria-label="Info"><ui-icon name="infoS"></ui-icon></button><button aria-label="Colors"><ui-icon name="tiles"></ui-icon></button><button aria-label="Columns"><ui-icon name="table"></ui-icon></button><tool-check checked>Fit Selected</tool-check></div>
<div class="g"><div class="v"><table><colgroup><col style="width:29px"><col style="width:50px"><col style="width:100px"><col style="width:35px"><col></colgroup>
<tr><th aria-label="Row"><ui-icon name="corner"></ui-icon></th><th>Ref.Des</th><th>Part</th><th>Pins</th><th></th></tr>
<tr><td aria-label="Filter"><ui-icon name="mag" w="14" h="14"></ui-icon></td><td><div class="q"><input aria-label="Filter by reference" value="&lt;."><ui-icon name="mag"></ui-icon></div></td><td><div class="q"><input aria-label="Filter by part" value="&lt;all&gt;"><ui-icon name="mag"></ui-icon></div></td><td></td><td></td></tr></table></div>
<scroll-bar dir="h"></scroll-bar></div></div>`);

define('browser-panel', `:host{display:flex;flex-direction:column;width:390px;flex:none;margin-left:7px}
header{height:49px;display:flex;align-items:center;justify-content:space-between;padding:0 8px 2px 3px}
h2{margin:0;font-size:25px;line-height:34px;font-weight:400}
header div{display:flex;gap:16px;align-items:center}header button{display:flex}
.b{flex:1;min-height:0;display:flex;gap:4px;padding-bottom:2px}`,
  `<header><h2>Browser</h2><div><button aria-label="Panel menu"><i class="caret"></i></button><button aria-label="Close panel"><ui-icon name="close"></ui-icon></button></div></header>
<div class="b"><object-tree></object-tree><parts-view></parts-view></div>`);

define('side-nav', `:host{display:block;width:60px;background:#3c3c3c;flex:none}
a{height:60px;display:flex;flex-direction:column;align-items:center;padding:9px 2px 0 0;gap:5px;font:700 10px/16px "DejaVu Sans",sans-serif;color:#dcdcdc}
a.on{background:#f00000;color:#fff}`,
  `<nav><a href="#home"><ui-icon name="home"></ui-icon>Home</a><a class="on" href="#browser"><ui-icon name="compass"></ui-icon>Browser</a><a href="#find"><ui-icon name="findN"></ui-icon>Find</a><a href="#layer"><ui-icon name="layerN"></ui-icon>Layer</a><a href="#review"><ui-icon name="review"></ui-icon>Review</a></nav>`);

define('status-bar', `:host{display:flex;align-items:center;height:36px;flex:none;background:var(--red);color:#fff;padding-left:4px}
.s{flex:1}span{display:flex;align-items:center;gap:5px;white-space:nowrap}`,
  `<div class="s">Ready</div><span style="width:177px"><ui-icon name="layerS"></ui-icon>art001.pho</span><span style="width:148px"><ui-icon name="gridS"></ui-icon>Grid: 0.01, 0.01</span><span style="width:175px">Abs: 2.99, 1.48</span><span style="width:56px">INCH</span><span style="width:30px"><ui-icon name="fitS"></ui-icon></span><span style="width:21px;padding-top:12px"><ui-icon name="grip"></ui-icon></span>`);

define('cad-app', `:host{display:flex;flex-direction:column;height:100vh;background:var(--bg);overflow:hidden}
.w{flex:1;min-height:0;display:flex;flex-direction:column;border:1px solid #b0101c;border-bottom:0;padding:0 2px}
main{flex:1;min-height:0;display:flex}
.l{flex:1;min-width:0;display:flex;flex-direction:column}`,
  `<div class="w"><title-bar></title-bar><menu-tabs></menu-tabs><app-ribbon></app-ribbon>
<main><div class="l"><doc-view></doc-view><output-panel></output-panel></div><browser-panel></browser-panel><side-nav></side-nav></main></div>
<status-bar></status-bar>`);
</script>
</body>
</html>
